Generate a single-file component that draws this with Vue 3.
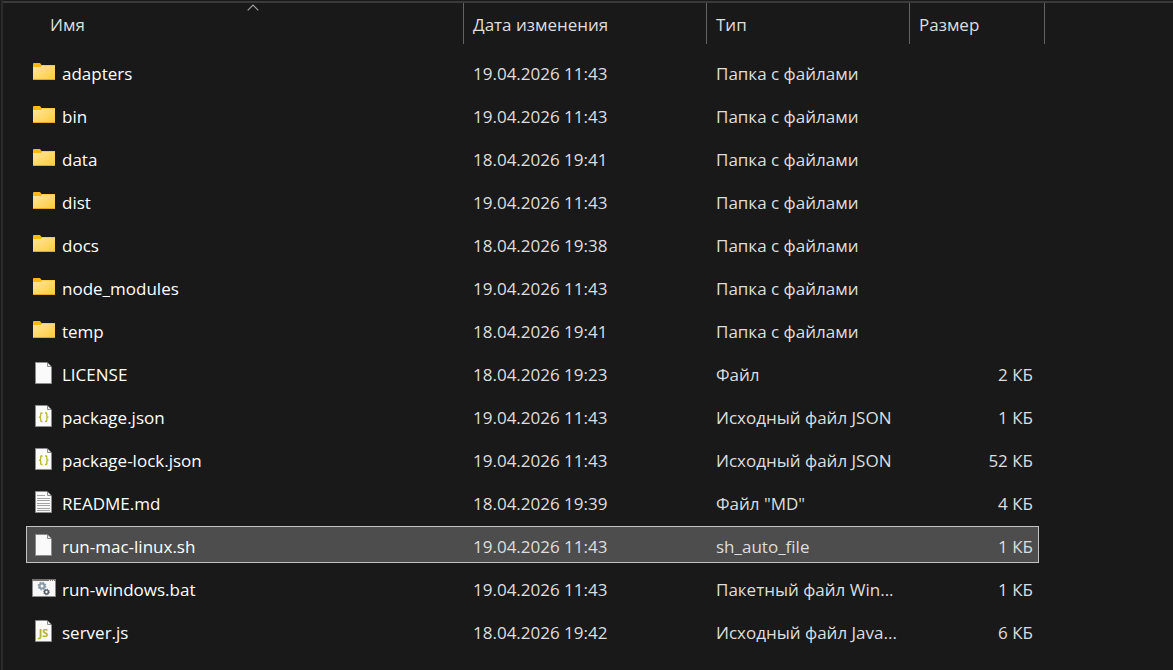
<script setup>
import { ref } from 'vue'

const folder = 'Папка с файлами'
const json = 'Исходный файл JSON'
const files = [
  { name: 'adapters', date: '19.04.2026 11:43', type: folder, size: '', icon: 'folder' },
  { name: 'bin', date: '19.04.2026 11:43', type: folder, size: '', icon: 'folder' },
  { name: 'data', date: '18.04.2026 19:41', type: folder, size: '', icon: 'folder' },
  { name: 'dist', date: '19.04.2026 11:43', type: folder, size: '', icon: 'folder' },
  { name: 'docs', date: '18.04.2026 19:38', type: folder, size: '', icon: 'folder' },
  { name: 'node_modules', date: '19.04.2026 11:43', type: folder, size: '', icon: 'folder' },
  { name: 'temp', date: '18.04.2026 19:41', type: folder, size: '', icon: 'folder' },
  { name: 'LICENSE', date: '18.04.2026 19:23', type: 'Файл', size: '2 КБ', icon: 'file' },
  { name: 'package.json', date: '19.04.2026 11:43', type: json, size: '1 КБ', icon: 'json' },
  { name: 'package-lock.json', date: '19.04.2026 11:43', type: json, size: '52 КБ', icon: 'json' },
  { name: 'README.md', date: '18.04.2026 19:39', type: 'Файл "MD"', size: '4 КБ', icon: 'text' },
  { name: 'run-mac-linux.sh', date: '19.04.2026 11:43', type: 'sh_auto_file', size: '1 КБ', icon: 'file' },
  { name: 'run-windows.bat', date: '19.04.2026 11:43', type: 'Пакетный файл Win...', size: '1 КБ', icon: 'bat' },
  { name: 'server.js', date: '18.04.2026 19:42', type: 'Исходный файл Java...', size: '6 КБ', icon: 'js' }
]
const selected = ref('run-mac-linux.sh')
</script>

<template>
  <main class="explorer">
    <table class="list">
      <thead>
        <tr class="row head">
          <th scope="col" aria-sort="ascending">
            <button type="button">Имя</button>
            <svg class="sort" width="12" height="7" viewBox="0 0 12 7" aria-hidden="true">
              <path d="M.7 6.3 6 1l5.300 5.300" fill="none" stroke="#a0a0a0" stroke-width="1.200" />
            </svg>
          </th>
          <th scope="col"><button type="button">Дата изменения</button></th>
          <th scope="col"><button type="button">Тип</button></th>
          <th scope="col"><button type="button">Размер</button></th>
        </tr>
      </thead>
      <tbody>
        <tr
          v-for="f in files"
          :key="f.name"
          class="row item"
          :class="{ selected: f.name === selected }"
          @click="selected = f.name"
        >
          <td class="name">
            <svg v-if="f.icon === 'folder'" class="icon" width="24" height="24" viewBox="0 0 24 24" aria-hidden="true">
              <defs>
                <linearGradient id="folderFace" x1="0" y1="0" x2="1" y2="1">
                  <stop offset="0" stop-color="#ffe6a0" />
                  <stop offset="1" stop-color="#ffca3a" />
                </linearGradient>
              </defs>
              <path d="M1 4q0-1 1-1h6l1.500 2H23v4H1z" fill="#fdb813" />
              <path d="M1 7h8l1-1.500h13V20H1z" fill="url(#folderFace)" />
              <path d="M1 19h22v1H1z" fill="#e5a823" />
            </svg>
            <svg v-else-if="f.icon === 'bat'" class="icon" width="24" height="24" viewBox="0 0 24 24" aria-hidden="true">
              <path d="M.5 3.500h23v17H.5z" fill="#f7f7f7" stroke="#8a8a8a" />
              <path d="M0 3h24v2H0z" fill="#77736f" />
              <path d="M17 4h1v1h-1zM19 4h1v1h-1zM21 4h1v1h-1z" fill="#eee" />
              <circle cx="10" cy="10" r="2.500" fill="none" stroke="#8b9ba8" stroke-width="2" />
              <circle cx="10" cy="10" r="3.700" fill="none" stroke="#8b9ba8" stroke-width="1.400" stroke-dasharray="1.500 1.406" />
              <circle cx="14.500" cy="16" r="1.900" fill="none" stroke="#59636c" stroke-width="1.500" />
              <circle cx="14.500" cy="16" r="2.900" fill="none" stroke="#59636c" stroke-width="1" stroke-dasharray="1.200 1.078" />
            </svg>
            <svg v-else class="icon" width="24" height="24" viewBox="0 0 24 24" aria-hidden="true">
              <path d="M3.500 1.500h11l5 5v16h-16z" fill="#fafafa" stroke="#8c8c8c" />
              <path d="M15.500 1.500v4h4" fill="#e4e4e4" stroke="#8c8c8c" />
              <path
                v-if="f.icon === 'text'"
                d="M5 5.500h8M5 8.500h13M5 10.500h13M5 13.500h13M5 15.500h13M5 18.500h13M5 20.500h13"
                stroke="#a2a2a2"
              />
              <g v-if="f.icon === 'json'" fill="none" stroke="#b9b928" stroke-width="1.300">
                <path d="M10.500 9h-1q-.8 0-.8.8V12q0 1.200-1.700 1.200 1.700 0 1.700 1.200v2.300q0 .8.8.8h1" />
                <path d="M13 9h1q.8 0 .8.8V12q0 1.200 1.700 1.200-1.700 0-1.700 1.200v2.300q0 .8-.8.8h-1" />
              </g>
              <text v-if="f.icon === 'js'" class="js" x="11.500" y="18" text-anchor="middle">JS</text>
            </svg>
            <span>{{ f.name }}</span>
          </td>
          <td>{{ f.date }}</td>
          <td>{{ f.type }}</td>
          <td class="size">{{ f.size }}</td>
        </tr>
      </tbody>
    </table>
  </main>
</template>

<style>
body {
  margin: 0;
  background: #191919;
}
</style>

<style scoped>
.explorer {
  box-sizing: border-box;
  min-height: 100vh;
  margin-left: 1px;
  padding: 1px 128px 18px 20px;
  border-left: 2px solid #2b2b2b;
  background: linear-gradient(#3b3939, #3b3939) 0 1px / 100% 2px no-repeat #191919;
  color: #dedede;
  font: 17px/24px "Segoe UI", "Open Sans", "Noto Sans", sans-serif;
}
.list,
thead {
  display: block;
}
.list {
  padding: 2px 0 0 3px;
}
.row {
  display: grid;
  grid-template-columns: minmax(0, 1fr) 243px 203px 135px;
}
.head th {
  position: relative;
  padding: 0;
  height: 41px;
  border-right: 1px solid #636363;
  text-align: left;
  font-weight: 400;
}
.head button {
  width: 100%;
  height: 100%;
  padding: 2px 9px 0;
  border: 0;
  background: none;
  color: inherit;
  font: inherit;
  text-align: left;
}
.head th:first-child button {
  padding-left: 24px;
}
.sort {
  position: absolute;
  top: 1px;
  left: calc(50% + 2px);
}
tbody {
  display: grid;
  gap: 6px;
  padding: 9px 6px 0 0;
}
.item {
  box-sizing: border-box;
  height: 37px;
  padding: 0 5px;
  border: 1px solid transparent;
  grid-template-columns: minmax(0, 1fr) 243px 203px 124px;
}
.item.selected {
  border-color: #c3c3c3;
  background: #4d4d4d;
}
td {
  display: flex;
  align-items: center;
  padding: 4px 0 0 10px;
  white-space: nowrap;
}
.name {
  gap: 6px;
  padding-left: 0;
  color: #fff;
}
.size {
  justify-content: flex-end;
  padding-right: 0;
}
.icon {
  flex: none;
  margin-bottom: 4px;
}
.js {
  fill: #b5b52a;
  font: 700 11px "Open Sans", sans-serif;
}
</style>
